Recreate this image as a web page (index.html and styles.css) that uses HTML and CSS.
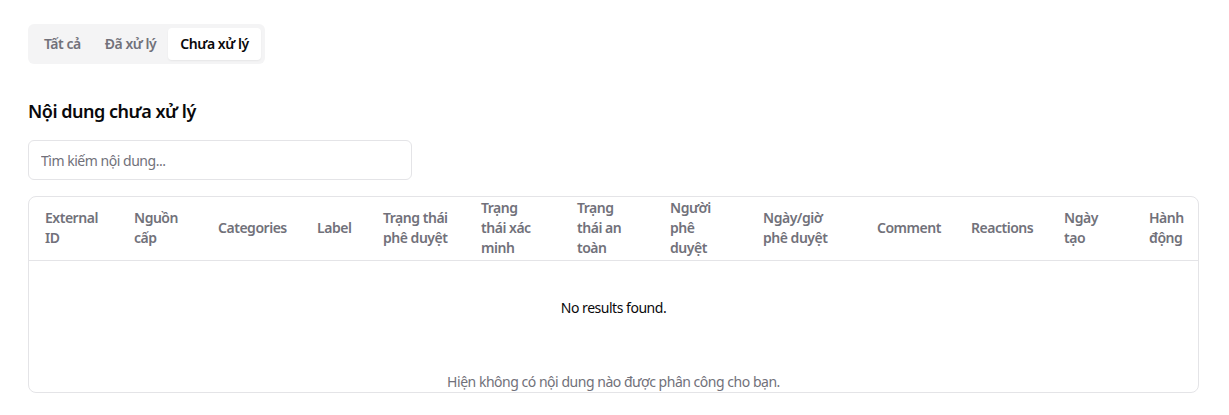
FILE: index.html
```html
<!DOCTYPE html>
<html lang="vi">
<head>
<meta charset="utf-8">
<title>Nội dung chưa xử lý</title>
<link rel="stylesheet" href="styles.css">
</head>
<body>
<div class="page">
  <div class="tabs">
    <button class="tab">Tất cả</button>
    <button class="tab">Đã xử lý</button>
    <button class="tab active">Chưa xử lý</button>
  </div>

  <h2 class="title">Nội dung chưa xử lý</h2>

  <input class="search" type="text" placeholder="Tìm kiếm nội dung...">

  <div class="table-card">
    <table class="table">
      <colgroup>
        <col class="c1"><col class="c2"><col class="c3"><col class="c4"><col class="c5"><col class="c6"><col class="c7"><col class="c8"><col class="c9"><col class="c10"><col class="c11"><col class="c12"><col class="c13">
      </colgroup>
      <thead>
        <tr>
          <th>External<br>ID</th>
          <th>Nguồn<br>cấp</th>
          <th>Categories</th>
          <th>Label</th>
          <th>Trạng thái<br>phê duyệt</th>
          <th>Trạng<br>thái xác<br>minh</th>
          <th>Trạng<br>thái an<br>toàn</th>
          <th>Người<br>phê<br>duyệt</th>
          <th>Ngày/giờ<br>phê duyệt</th>
          <th>Comment</th>
          <th>Reactions</th>
          <th>Ngày<br>tạo</th>
          <th>Hành<br>động</th>
        </tr>
      </thead>
      <tbody>
        <tr>
          <td class="empty" colspan="13">No results found.</td>
        </tr>
      </tbody>
    </table>
    <p class="note">Hiện không có nội dung nào được phân công cho bạn.</p>
  </div>
</div>
</body>
</html>
```

FILE: styles.css
```css
* { box-sizing: border-box; }
html, body { margin: 0; background: #ffffff; }
body {
  font-family: "Noto Sans", "Open Sans", "Liberation Sans", sans-serif;
  color: #09090b;
  font-size: 14px;
  line-height: 20px;
  letter-spacing: -0.034em;
}
.page {
  padding: 24px 30px 0 28px;
}
.tabs {
  display: inline-flex;
  align-items: center;
  height: 40px;
  padding: 4px;
  background: #f4f4f5;
  border-radius: 6px;
}
.tab {
  font-family: inherit;
  font-size: 14px;
  font-weight: 600;
  line-height: 20px;
  letter-spacing: inherit;
  height: 32px;
  padding: 0 12px;
  border: 0;
  border-radius: 4px;
  background: transparent;
  color: #71717a;
  cursor: pointer;
}
.tab.active {
  background: #ffffff;
  color: #09090b;
  box-shadow: 0 1px 2px rgba(0,0,0,0.06);
}
.title {
  margin: 33px 0 15px;
  font-size: 18px;
  line-height: 28px;
  font-weight: 600;
}
.search {
  display: block;
  width: 384px;
  height: 40px;
  padding: 0 12px;
  border: 1px solid #e4e4e7;
  border-radius: 6px;
  font-family: inherit;
  font-size: 14px;
  letter-spacing: inherit;
  color: #09090b;
  background: #fff;
  outline: none;
}
.search::placeholder { color: #71717a; }
.table-card {
  margin-top: 16px;
  border: 1px solid #e4e4e7;
  border-radius: 8px;
  overflow: hidden;
}
.table {
  width: 100%;
  border-collapse: collapse;
  table-layout: fixed;
}
.c1 { width: 89px; } .c2 { width: 84px; } .c3 { width: 99px; } .c4 { width: 66px; }
.c5 { width: 98px; } .c6 { width: 96px; } .c7 { width: 93px; } .c8 { width: 93px; }
.c9 { width: 114px; } .c10 { width: 94px; } .c11 { width: 93px; } .c12 { width: 85px; }
.c13 { width: 65px; }
.table th {
  height: 63px;
  padding: 0 0 0 16px;
  text-align: left;
  vertical-align: middle;
  font-weight: 600;
  color: #71717a;
  white-space: nowrap;
  border-bottom: 1px solid #e4e4e7;
}
.table td.empty {
  height: 96px;
  text-align: center;
  vertical-align: middle;
  color: #09090b;
}
.note {
  margin: 16px 0 0;
  text-align: center;
  color: #71717a;
}
```
